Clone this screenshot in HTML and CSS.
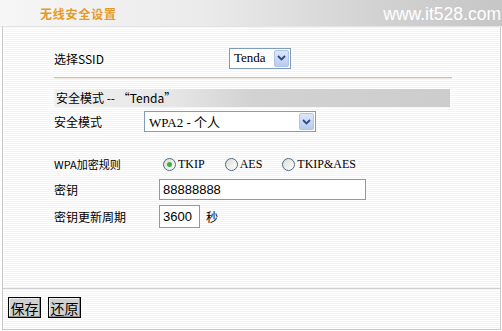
FILE: index.html
```html
<!DOCTYPE html>
<html lang="zh-CN">
<head>
    <meta charset="UTF-8">
    <title>无线安全设置</title>
    <link rel="stylesheet" href="styles.css">
</head>
<body>
    <div class="page">
        <div class="header">
            <span class="title">无线安全设置</span>
            <span class="brand">www.it528.com</span>
        </div>

        <div class="content">
            <div class="row row-ssid">
                <span class="label">选择SSID</span>
                <div class="select select-ssid">
                    <span class="select-text">Tenda</span>
                    <span class="select-arrow">
                        <svg width="9" height="6" viewBox="0 0 9 6"><path d="M1 1 L4.5 4.5 L8 1" fill="none" stroke="#2a4a8a" stroke-width="1.8"/></svg>
                    </span>
                </div>
            </div>

            <div class="divider"></div>

            <div class="section-bar">安全模式 -- “Tenda”</div>

            <div class="row row-mode">
                <span class="label">安全模式</span>
                <div class="select select-mode">
                    <span class="select-text">WPA2 - 个人</span>
                    <span class="select-arrow">
                        <svg width="9" height="6" viewBox="0 0 9 6"><path d="M1 1 L4.5 4.5 L8 1" fill="none" stroke="#2a4a8a" stroke-width="1.8"/></svg>
                    </span>
                </div>
            </div>

            <div class="row row-cipher">
                <span class="label">WPA加密规则</span>
                <div class="radios">
                    <label class="radio"><span class="dot checked"></span>TKIP</label>
                    <label class="radio"><span class="dot"></span>AES</label>
                    <label class="radio"><span class="dot"></span>TKIP&amp;AES</label>
                </div>
            </div>

            <div class="row row-key">
                <span class="label">密钥</span>
                <div class="input input-key">88888888</div>
            </div>

            <div class="row row-period">
                <span class="label">密钥更新周期</span>
                <div class="input input-period">3600</div>
                <span class="unit">秒</span>
            </div>
        </div>

        <div class="footer">
            <button class="btn">保存</button>
            <button class="btn">还原</button>
        </div>
    </div>
</body>
</html>
```

FILE: styles.css
```css
* {
    margin: 0;
    padding: 0;
    box-sizing: border-box;
}

body {
    width: 502px;
    height: 331px;
    overflow: hidden;
    background: #fff;
    font-family: "Liberation Serif", "Noto Sans CJK SC", serif;
    font-size: 12px;
    color: #000;
}

.page {
    width: 499px;
    height: 330px;
    margin-left: 2px;
    border-left: 1px solid #c8c8c8;
    border-right: 1px solid #c8c8c8;
    border-bottom: 1px solid #c8c8c8;
    background: repeating-linear-gradient(#ffffff 0 1px, #f4f4f4 1px 2px);
}

.header {
    height: 27px;
    margin-left: -3px;
    width: 503px;
    display: flex;
    align-items: center;
    justify-content: space-between;
    background: linear-gradient(to right, #f6f6f6 0%, #ebebeb 40%, #d2d2d2 75%, #c6c6c6 100%);
    border-bottom: 1px solid #e4e4e4;
}

.title {
    padding-left: 40px;
    color: #e69a26;
    font-family: "Noto Sans CJK SC", sans-serif;
    font-weight: bold;
    font-size: 12px;
    letter-spacing: 0.8px;
}

.brand {
    padding-right: 2px;
    color: #fff;
    font-family: "Liberation Sans", sans-serif;
    font-size: 17.5px;
    padding-top: 2px;
}

.content {
    padding: 20px 0 0 49px;
    height: 261px;
}

.row {
    display: flex;
    align-items: center;
}

.label {
    font-family: "Noto Sans CJK SC", sans-serif;
    font-size: 12px;
    padding-left: 2px;
}

.row-ssid {
    height: 22px;
}

.row-ssid .label {
    width: 177px;
}

.select {
    height: 21px;
    background: #fff;
    border: 1px solid #7f9db9;
    display: flex;
    align-items: center;
    justify-content: space-between;
    padding: 0 1px 0 4px;
}

.select-text {
    font-family: "Liberation Serif", "Noto Sans CJK SC", serif;
    font-size: 13px;
}

.select-arrow {
    width: 15px;
    height: 17px;
    background: linear-gradient(#dce6f8, #b8cbef);
    border: 1px solid #b0c4ea;
    border-radius: 2px;
    display: flex;
    align-items: center;
    justify-content: center;
}

.select-ssid {
    width: 62px;
}

.divider {
    width: 398px;
    margin-left: 2px;
    margin-top: 8px;
    height: 2px;
    background: #c9c3b2;
    border-bottom: 1px solid #eeeae0;
}

.section-bar {
    margin-top: 10px;
    margin-left: 2px;
    width: 396px;
    height: 18px;
    line-height: 18px;
    padding-left: 2px;
    background: linear-gradient(to right, #f0f0f0 0%, #e6e6e6 30%, #d2d2d2 50%, #cdcdcd 100%);
    font-family: "Noto Sans CJK SC", sans-serif;
}

.row-mode {
    height: 21px;
    margin-top: 4px;
}

.row-mode .label {
    width: 92px;
}

.select-mode {
    width: 172px;
}

.row-cipher {
    height: 18px;
    margin-top: 23px;
}

.row-cipher .label {
    width: 111px;
    font-size: 11px;
}

.radios {
    display: flex;
}

.radio {
    display: flex;
    align-items: center;
    font-family: "Liberation Serif", serif;
    font-size: 12px;
    margin-right: 20px;
}

.dot {
    width: 13px;
    height: 13px;
    border-radius: 50%;
    border: 1px solid #4a6a8c;
    background: linear-gradient(135deg, #dcdcd4, #ffffff);
    margin-right: 2px;
    position: relative;
}

.dot.checked::after {
    content: "";
    position: absolute;
    left: 3px;
    top: 3px;
    width: 5px;
    height: 5px;
    border-radius: 50%;
    background: #3fae3f;
}

.input {
    height: 21px;
    background: #fff;
    border: 1px solid #7f9db9;
    display: flex;
    align-items: center;
    padding-left: 3px;
    font-family: "Liberation Sans", sans-serif;
    font-size: 13px;
}

.row-key {
    height: 21px;
    margin-top: 6px;
}

.row-key .label,
.row-period .label {
    width: 107px;
}

.input-key {
    width: 207px;
}

.row-period {
    height: 23px;
    margin-top: 5px;
}

.input-period {
    width: 41px;
    height: 23px;
}

.unit {
    font-family: "Noto Sans CJK SC", sans-serif;
    margin-left: 6px;
}

.footer {
    border-top: 1px solid #cfcfcf;
    padding: 8px 0 0 5px;
    display: flex;
    gap: 7px;
}

.btn {
    width: 33px;
    height: 21px;
    background: #d0d0d0;
    border: 1px solid #000;
    box-shadow: inset -1px -1px 0 #909090, inset 1px 1px 0 #f0f0f0;
    font-family: "Noto Sans CJK SC", sans-serif;
    font-size: 14px;
    line-height: 18px;
    color: #000;
}
```
